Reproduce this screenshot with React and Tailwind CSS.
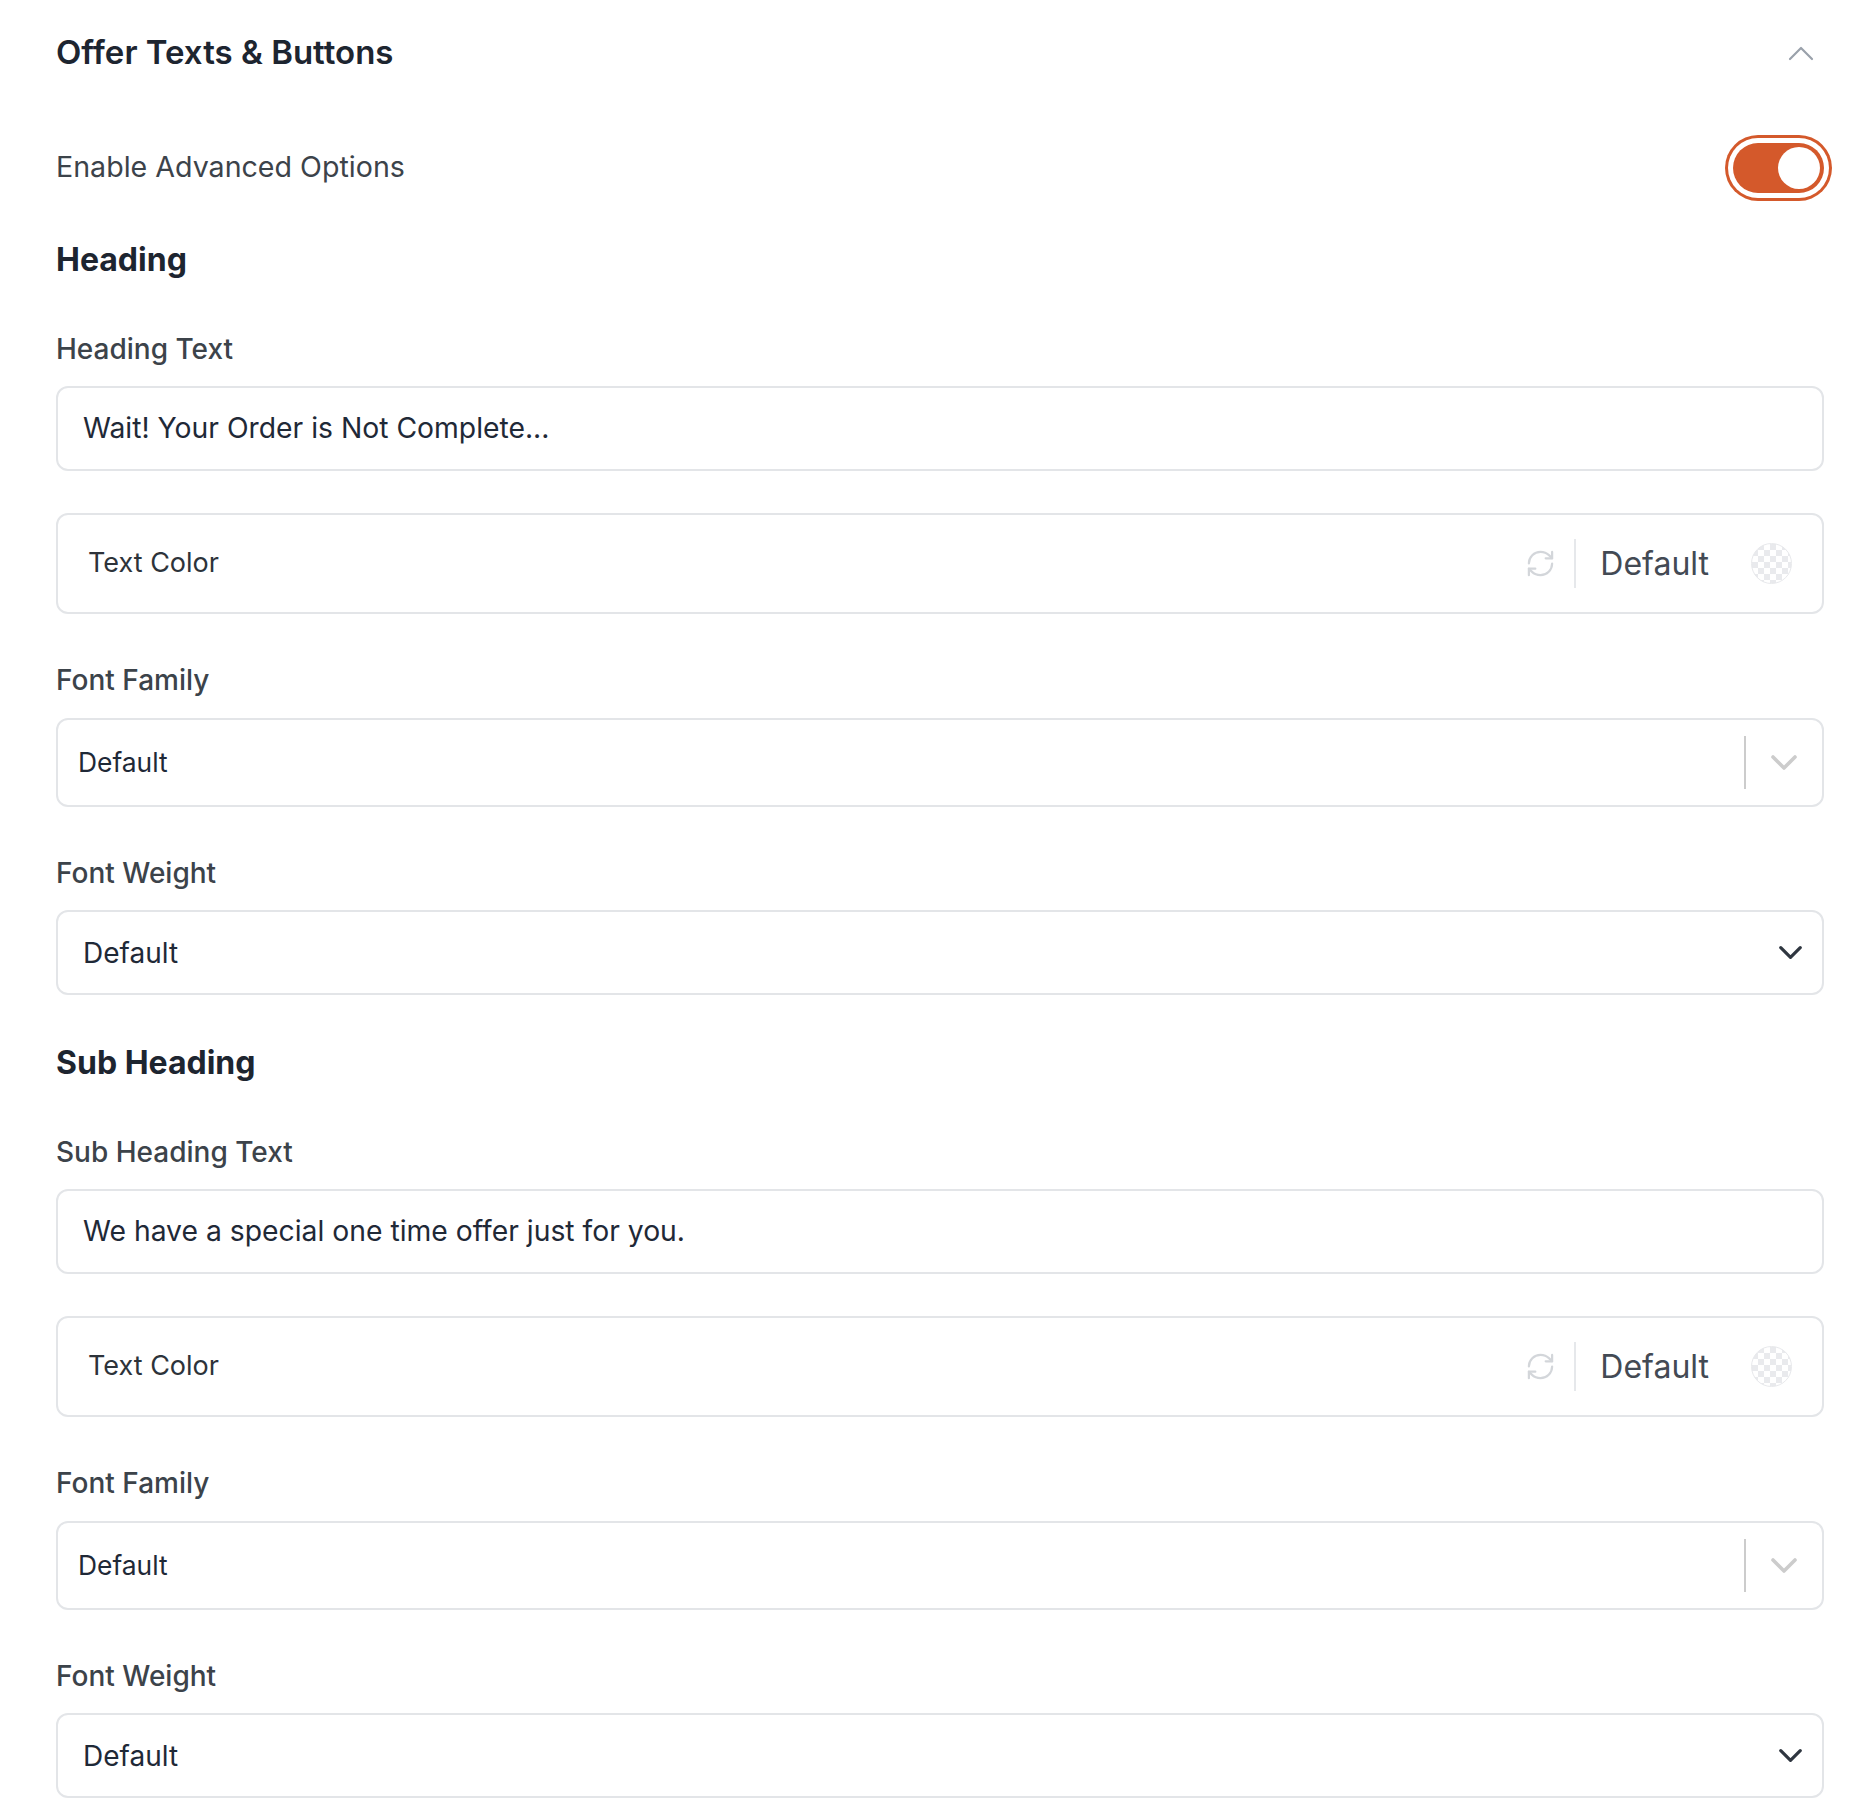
import React from 'react';
import { RefreshCw } from 'lucide-react';

const Chevron = ({ up = false, className = '', strokeWidth = 3.4, w = 26 }) => (
  <svg width={w} height="16" viewBox="0 0 26 16" fill="none" className={className}>
    <polyline
      points={up ? '2,14 13,3 24,14' : '2,2 13,13 24,2'}
      stroke="currentColor"
      strokeWidth={strokeWidth}
      strokeLinecap="round"
      strokeLinejoin="round"
    />
  </svg>
);

const Label = ({ children }) => (
  <div className="text-[28px] leading-[36px] font-medium text-[#3c434a]">{children}</div>
);

const TextInput = ({ value }) => (
  <div className="mt-[19px] h-[85px] rounded-[12px] border-2 border-[#e3e5e8] bg-white flex items-center px-[25px] text-[28.3px] text-[#1f2937]">
    {value}
  </div>
);

const ColorField = () => (
  <div className="mt-[42px] h-[101px] rounded-[12px] border-2 border-[#e3e5e8] bg-white flex items-center pl-[30px] pr-[30px]">
    <span className="flex-1 text-[27px] text-[#2d333a]">Text Color</span>
    <RefreshCw size={31} strokeWidth={1.7} className="text-[#d3d6da]" />
    <span className="ml-[18px] w-[2px] h-[49px] bg-[#e6e8eb]" />
    <span className="ml-[24px] text-[32px] text-[#434a54]">Default</span>
    <span className="ml-[42px] w-[41px] h-[41px] rounded-full border border-[#e8e9ec] bg-[image:conic-gradient(#e9eaed_25%,#ffffff_0_50%,#e9eaed_0_75%,#ffffff_0)] bg-[length:12px_12px]" />
  </div>
);

const FontFamilySelect = () => (
  <div className="mt-[20px] h-[89px] rounded-[12px] border-2 border-[#e3e5e8] bg-white flex items-center pl-[20px]">
    <span className="flex-1 text-[26.4px] text-[#1f2937]">Default</span>
    <span className="w-[2px] h-[53px] bg-[#cccccc]" />
    <span className="w-[76px] flex justify-center">
      <Chevron className="text-[#cccccc]" strokeWidth={3.6} />
    </span>
  </div>
);

const FontWeightSelect = () => (
  <div className="mt-[19px] h-[85px] rounded-[12px] border-2 border-[#e3e5e8] bg-white flex items-center pl-[25px] pr-[20px]">
    <span className="flex-1 text-[28px] text-[#1f2937]">Default</span>
    <Chevron className="text-[#2f3640]" strokeWidth={3.6} w={23} />
  </div>
);

const TypographyBlock = ({ title, label, value }) => (
  <div>
    <h2 className="mt-[40px] text-[32px] leading-[40px] font-bold text-[#1d2530]">{title}</h2>
    <div className="mt-[51px]">
      <Label>{label}</Label>
      <TextInput value={value} />
    </div>
    <ColorField />
    <div className="mt-[48px]">
      <Label>Font Family</Label>
      <FontFamilySelect />
    </div>
    <div className="mt-[48px]">
      <Label>Font Weight</Label>
      <FontWeightSelect />
    </div>
  </div>
);

export default function App() {
  return (
    <div className="w-[1875px] min-h-[1812px] bg-white pl-[56px] pr-[51px] pt-[33px] font-['Inter','Noto_Sans',sans-serif]">
      <div className="flex items-center justify-between h-[40px]">
        <h1 className="text-[33px] font-semibold text-[#1d2530]">Offer Texts &amp; Buttons</h1>
        <Chevron up className="text-[#9aa1ab] mr-[10px]" strokeWidth={2.2} />
      </div>

      <div className="mt-[62px] flex items-center justify-between h-[65px]">
        <span className="text-[28.6px] text-[#3c434a]">Enable Advanced Options</span>
        <button className="w-[91px] h-[50px] rounded-full bg-[#d4592b] ring-[3px] ring-[#d4592b] ring-offset-[5px] flex items-center justify-end pr-[4px]">
          <span className="w-[42px] h-[42px] rounded-full bg-white" />
        </button>
      </div>

      <TypographyBlock title="Heading" label="Heading Text" value="Wait! Your Order is Not Complete..." />
      <div className="pt-[8px]">
        <TypographyBlock title="Sub Heading" label="Sub Heading Text" value="We have a special one time offer just for you." />
      </div>
    </div>
  );
}
